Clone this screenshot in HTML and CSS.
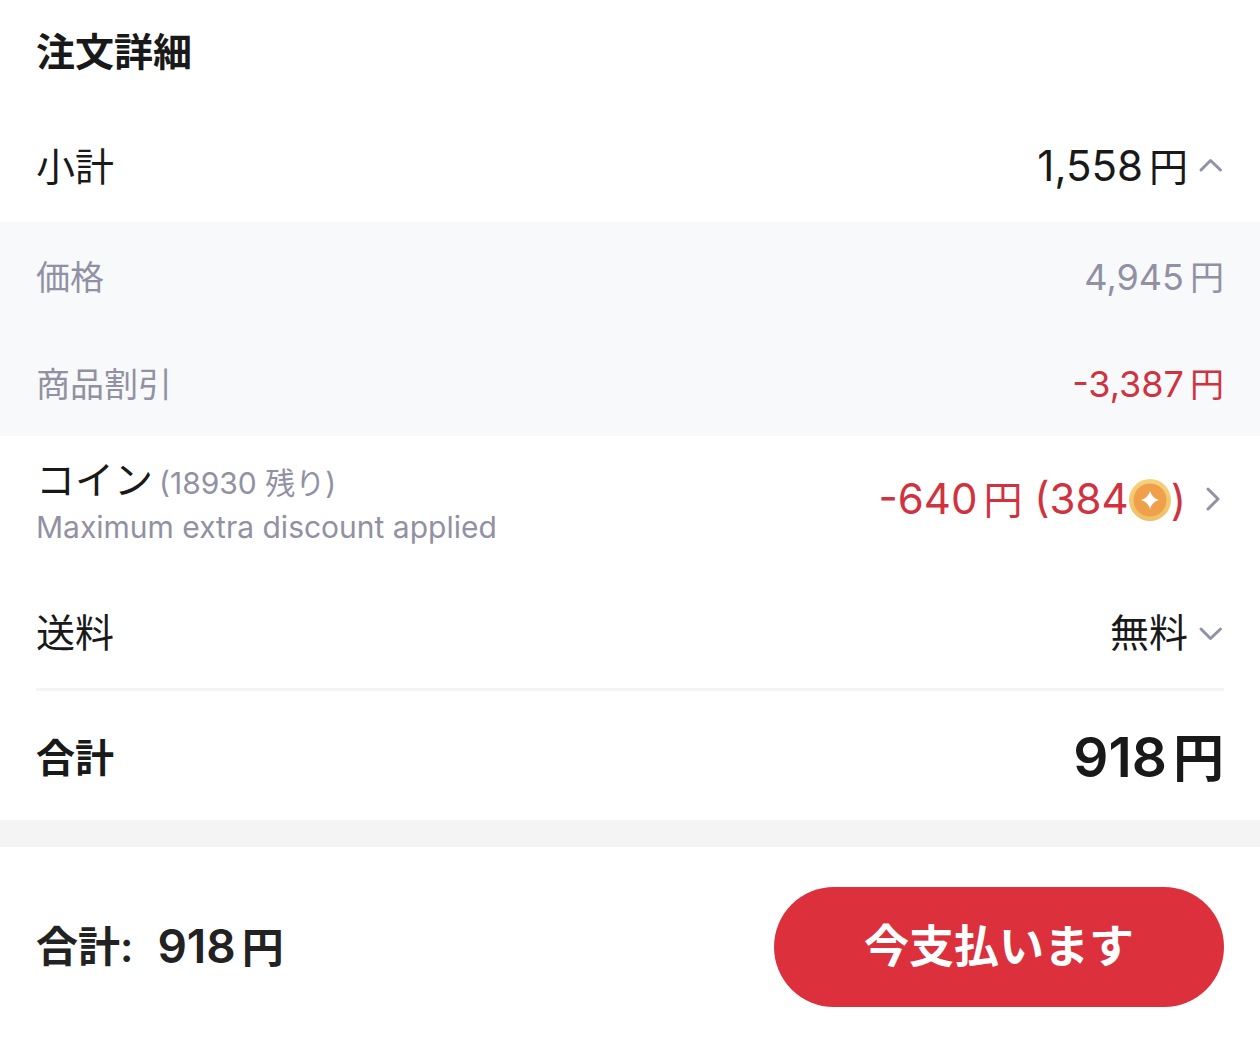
FILE: index.html
```html
<!DOCTYPE html>
<html lang="ja">
<head>
<meta charset="utf-8">
<meta name="viewport" content="width=device-width, initial-scale=1">
<title>注文詳細</title>
<link rel="stylesheet" href="styles.css">
</head>
<body>
<main class="order">
  <h1 class="title">注文詳細</h1>
  <section class="row subtotal">
    <span>小計</span>
    <button class="toggle" type="button" aria-expanded="true"><span class="amount">1,558<span class="yen">円</span></span>
      <svg class="chevron" viewBox="0 0 24 24" aria-hidden="true"><path d="M1 15 10.500 5.500 20.500 15"/></svg>
    </button>
  </section>
  <div class="breakdown">
    <div class="row detail"><span>価格</span><span class="amount">4,945<span class="yen">円</span></span></div>
    <div class="row detail"><span>商品割引</span><span class="amount red">-3,387<span class="yen">円</span></span></div>
  </div>
  <section class="row coins">
    <div class="coin-text">
      <div class="coin-name">コイン<span class="remaining">(18930 残り)</span></div>
      <div class="note">Maximum extra discount applied</div>
    </div>
    <button class="toggle red" type="button">
      <span class="amount">-640<span class="yen">円</span> (384</span>
      <svg class="coin" viewBox="0 0 42 42" aria-hidden="true">
        <defs><linearGradient id="rim" x2="0" y2="1"><stop stop-color="#f5d27c"/><stop offset="1" stop-color="#eec067"/></linearGradient></defs>
        <circle cx="21" cy="21" r="21" fill="url(#rim)"/><circle cx="21" cy="21" r="16.500" fill="#f0a04b"/>
        <path fill="#fff" d="M21 12Q23 19 30 21Q23 23 21 30Q19 23 12 21Q19 19 21 12Z"/>
      </svg>
      <span class="amount">)</span>
      <svg class="chevron next" viewBox="0 0 24 24" aria-hidden="true"><path d="M8 1 18 11 8 21"/></svg>
    </button>
  </section>
  <section class="row shipping">
    <span>送料</span>
    <button class="toggle" type="button" aria-expanded="false"><span>無料</span>
      <svg class="chevron" viewBox="0 0 24 24" aria-hidden="true"><path d="M1 8 10.500 17.500 20.500 8"/></svg>
    </button>
  </section>
  <section class="row total">
    <span>合計</span><span class="grand">918<span class="yen">円</span></span>
  </section>
</main>
<footer class="checkout">
  <div class="sum"><span>合計:</span><span class="sum-value">918<span class="yen">円</span></span></div>
  <button class="pay" type="button">今支払います</button>
</footer>
</body>
</html>
```
FILE: styles.css
```css
* { box-sizing: border-box; }
body { margin: 0; background: #fff; color: #191919; font-family: Inter, "Noto Sans CJK JP", sans-serif; font-size: 39px; line-height: 56px; }
button { margin: 0; padding: 0; border: 0; background: none; color: inherit; font: inherit; cursor: pointer; }
.title { margin: 0; padding: 24px 36px; font-size: 39px; line-height: 56px; font-weight: 600; }
.row { display: flex; align-items: center; justify-content: space-between; padding: 0 36px; }
.subtotal { padding-top: 34px; padding-bottom: 27px; }
.toggle { display: flex; align-items: center; }
.amount { font-size: 42px; }
.yen { margin-left: 6px; font-size: 39px; }
.chevron { width: 24px; height: 24px; margin-left: 12px; overflow: visible; fill: none; stroke: #9292a6; stroke-width: 3; stroke-linecap: round; stroke-linejoin: round; }
.breakdown { background: #f8f9fb; color: #9191a3; }
.detail { padding-top: 27px; padding-bottom: 23px; font-size: 34px; }
.detail .amount { font-size: 36px; }
.detail .yen { font-size: 34px; }
.red { color: #d0333f; }
.coins { padding-top: 18px; padding-bottom: 22px; }
.coin-name { line-height: 52px; }
.remaining { margin-left: 6px; font-size: 30px; color: #9191a3; }
.note { font-size: 30px; line-height: 36px; color: #9191a3; }
.coin { width: 42px; height: 42px; }
.next { margin-left: 14px; }
.shipping { margin: 0 36px; padding: 38px 0 27px; border-bottom: 3px solid #f4f4f5; }
.total { padding-top: 38px; padding-bottom: 33px; font-weight: 600; }
.grand { font-size: 55px; }
.grand .yen { font-size: 51px; }
.checkout { display: flex; align-items: center; justify-content: space-between; padding: 40px 36px; border-top: 27px solid #f4f4f4; color: #222; font-size: 42px; font-weight: 600; }
.sum { display: flex; align-items: center; gap: 24px; }
.sum-value { font-size: 46px; }
.sum .yen { font-size: 42px; }
.pay { width: 450px; height: 120px; border-radius: 60px; background: #dc303c; color: #fff; font-size: 45px; font-weight: 600; }
```
